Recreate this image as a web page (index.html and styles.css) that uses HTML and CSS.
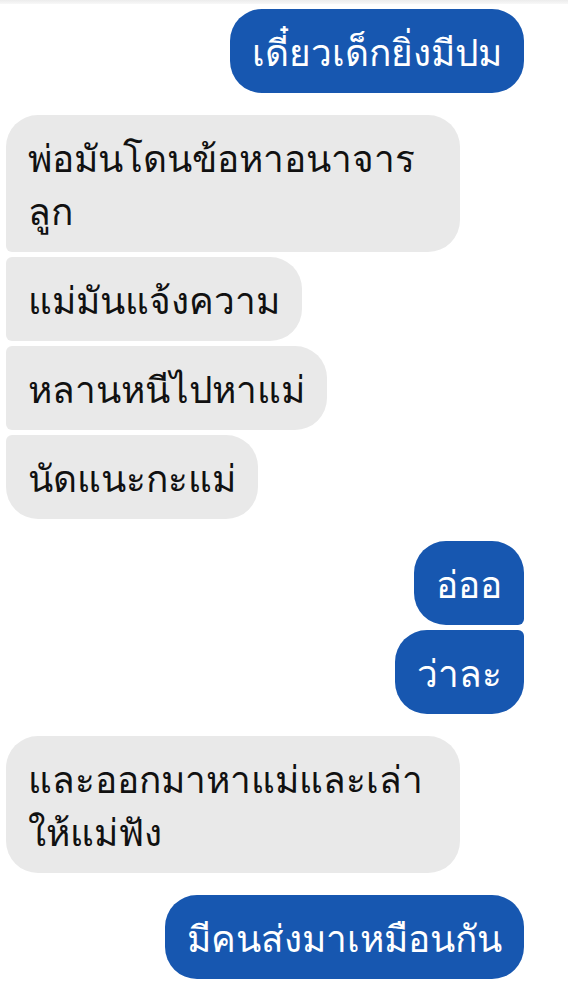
FILE: index.html
```html
<!DOCTYPE html>
<html>
  <head>
    <title>Chat</title>
    <link rel="stylesheet" href="styles.css">
  </head>
  <body>
    <div class="top-bar"></div>
    <div class="chat">
      <div class="msg sent single">เดี๋ยวเด็กยิ่งมีปม</div>

      <div class="group received">
        <div class="msg wide first">พ่อมันโดนข้อหาอนาจาร<br>ลูก</div>
        <div class="msg middle">แม่มันแจ้งความ</div>
        <div class="msg middle">หลานหนีไปหาแม่</div>
        <div class="msg last">นัดแนะกะแม่</div>
      </div>

      <div class="group sent-group">
        <div class="msg sent first">อ่ออ</div>
        <div class="msg sent last">ว่าละ</div>
      </div>

      <div class="msg wide received-one">และออกมาหาแม่และเล่า<br>ให้แม่ฟัง</div>

      <div class="msg sent single">มีคนส่งมาเหมือนกัน</div>
    </div>
  </body>
</html>
```

FILE: styles.css
```css
body {
  margin: 0;
  background-color: #ffffff;
  font-family: "Noto Sans", "Liberation Sans", sans-serif;
}

.top-bar {
  height: 4px;
  background: linear-gradient(#ececec, #f8f8f8);
}

.chat {
  display: flex;
  flex-direction: column;
  align-items: flex-start;
  gap: 22px;
  padding: 5px 44px 20px 6px;
}

.msg {
  font-size: 37px;
  line-height: 53px;
  padding: 15.5px 22px;
  border-radius: 32px;
  background-color: #e9e9e9;
  color: #111111;
}

.msg.wide {
  box-sizing: border-box;
  width: 454px;
}

.msg.sent {
  background-color: #1757b0;
  color: #ffffff;
}

.msg.single {
  align-self: flex-end;
}

.group {
  display: flex;
  flex-direction: column;
  gap: 5px;
}

.group.received {
  align-items: flex-start;
  align-self: flex-start;
}

.group.received .first {
  border-bottom-left-radius: 6px;
}

.group.received .middle {
  border-top-left-radius: 6px;
  border-bottom-left-radius: 6px;
}

.group.received .last {
  border-top-left-radius: 6px;
}

.group.sent-group {
  align-items: flex-end;
  align-self: flex-end;
}

.group.sent-group .first {
  border-bottom-right-radius: 6px;
}

.group.sent-group .last {
  border-top-right-radius: 6px;
}

.received-one {
  align-self: flex-start;
}
```
